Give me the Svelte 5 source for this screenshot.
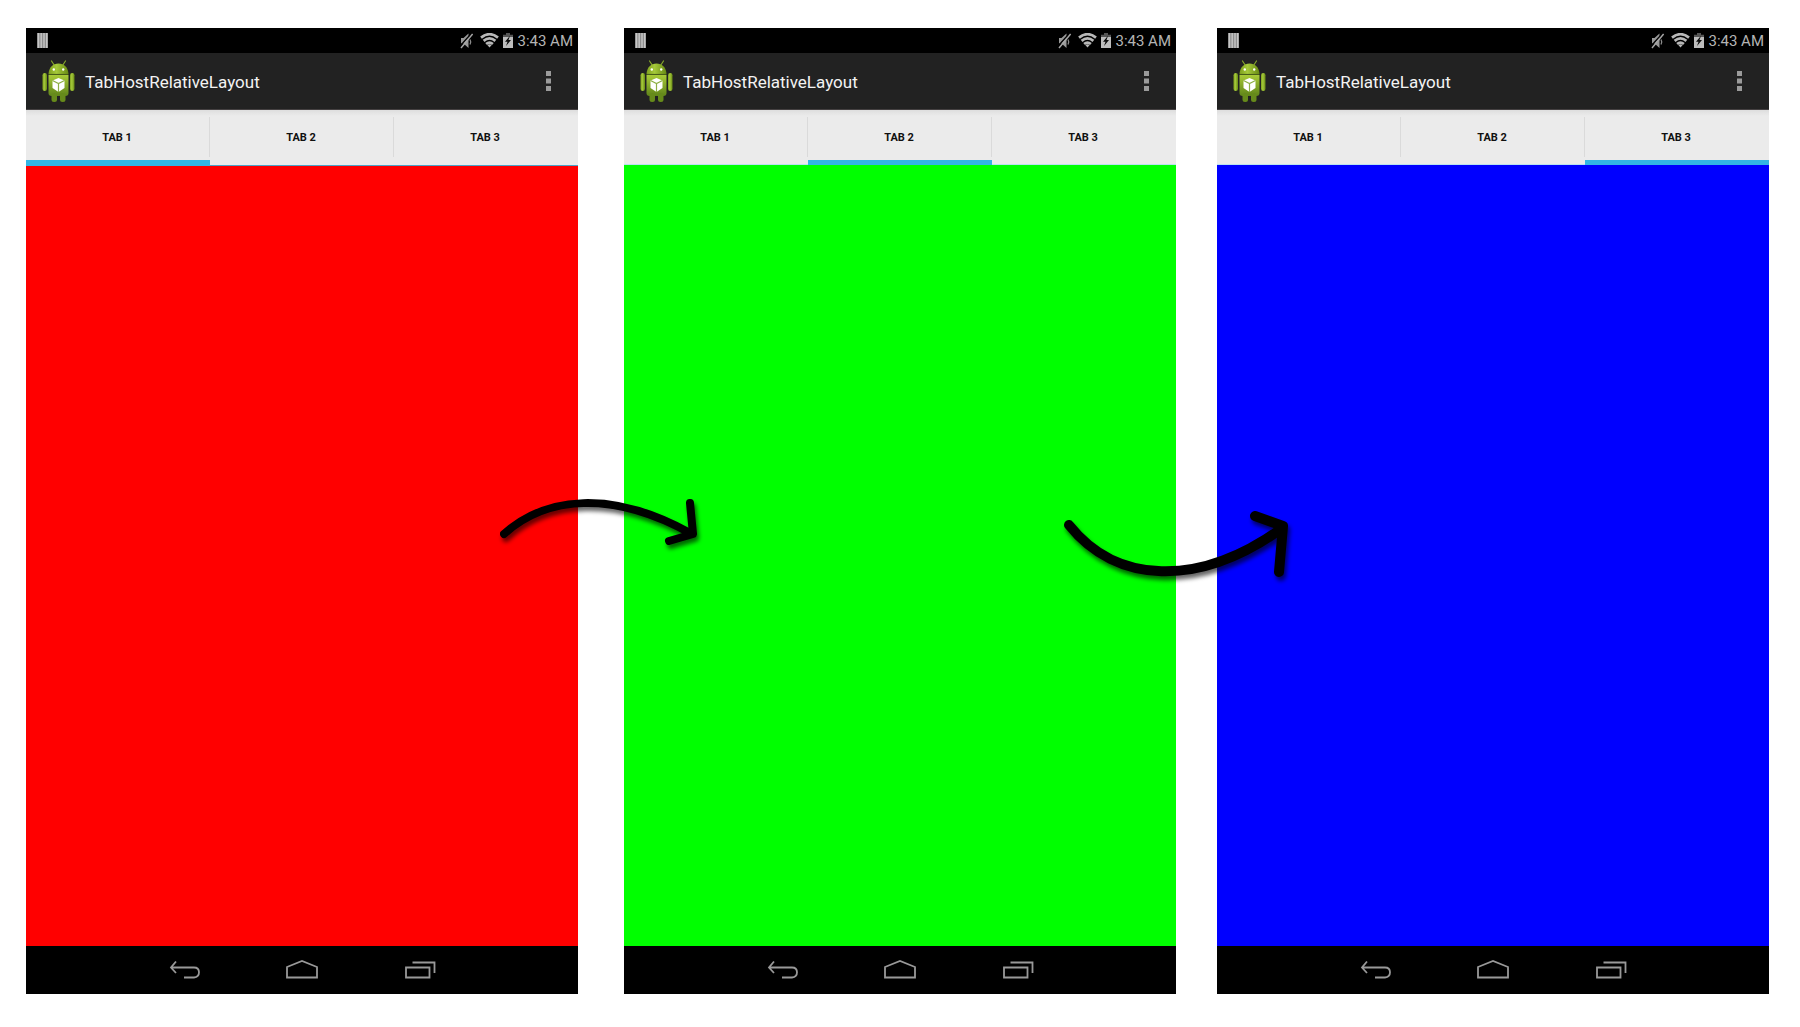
<script>
  const tabs = ['TAB 1', 'TAB 2', 'TAB 3'];
  const screens = [
    { selected: 0, tone: 'red' },
    { selected: 1, tone: 'green' },
    { selected: 2, tone: 'blue' }
  ];
</script>

<main class="board">
  {#each screens as screen, n}
    <section class="phone {screen.tone}" aria-label="Screen {n + 1}">
      <div class="status">
        <svg class="tray" width="11" height="15" viewBox="0 0 11 15" aria-hidden="true">
          <rect width="11" height="15" fill="#8e8e8e" />
          <path d="M1.5 0v15M4.2 0v15M7 0v15M9.7 0v15" stroke="#c6c6c6" stroke-width="1.4" />
        </svg>
        <div class="indicators">
          <svg class="mute" width="14" height="16" viewBox="0 0 14 16" aria-hidden="true">
            <path d="M1 5h2.500L8.500 0.500V15L3.500 10.500H1z" fill="#999" />
            <path d="M10 6.500q1.500 2.500 0 5" fill="none" stroke="#8c8c8c" stroke-width="1.300" />
            <path d="M11 1L-1 14" stroke="#000" stroke-width="1.400" />
            <path d="M12.600 1L1 15" stroke="#a8a8a8" stroke-width="1.400" />
          </svg>
          <svg width="19" height="15" viewBox="0 0 19 15" aria-hidden="true">
            <g fill="none" stroke="#b8b8b8" stroke-width="2.700">
              <path d="M1 4.600Q9.500 -2.200 18 4.600" />
              <path d="M3.600 7.900Q9.500 3 15.400 7.900" />
              <path d="M6.100 11Q9.500 8.100 12.900 11" />
            </g>
            <path d="M7.300 12Q9.500 10.500 11.700 12L9.500 14.600z" fill="#b8b8b8" />
          </svg>
          <svg width="10" height="15" viewBox="0 0 10 15" aria-hidden="true">
            <path d="M3 0h4v1.800h3v4H0v-4h3z" fill="#555" />
            <path d="M0 4h10v11H0z" fill="#bdbdbd" />
            <path d="M7 2.700L2 8.700h2.500L3 13l5-6H5.500z" fill="#0a0a0a" />
          </svg>
          <span class="time">3:43 AM</span>
        </div>
      </div>

      <header class="actionbar">
        <svg class="robot" width="33" height="43" viewBox="0 0 33 43" aria-hidden="true">
          <defs>
            <linearGradient id="skin{n}" x1="0" x2="1" y1="0" y2="0">
              <stop offset="0" stop-color="#7fa01e" />
              <stop offset="0.4" stop-color="#a5c93a" />
              <stop offset="1" stop-color="#688a14" />
            </linearGradient>
            <linearGradient id="body{n}" x1="0" x2="0" y1="0" y2="1">
              <stop offset="0" stop-color="#a9cb38" />
              <stop offset="1" stop-color="#5f8419" />
            </linearGradient>
          </defs>
          <path d="M9.500 1L12.500 5.500M23.500 1L20.500 5.500" stroke="#86a72b" stroke-width="1.200" stroke-linecap="round" />
          <path d="M6.500 14C7 7 11 3.500 16.500 3.500S26 7 26.500 14z" fill="url(#skin{n})" />
          <path d="M6.500 15h20v18q0 3-3 3h-14q-3 0-3-3z" fill="url(#body{n})" />
          <path d="M6.500 14.400h20" stroke="#587714" stroke-width="0.800" />
          <rect x="0.500" y="13" width="4.500" height="18" rx="2.200" fill="url(#skin{n})" />
          <rect x="28" y="13" width="4.500" height="18" rx="2.200" fill="url(#skin{n})" />
          <rect x="9.500" y="33" width="5.500" height="9" rx="2.500" fill="#668a1b" />
          <rect x="18" y="33" width="5.500" height="9" rx="2.500" fill="#668a1b" />
          <circle cx="11.800" cy="9.500" r="1.200" fill="#fff" />
          <circle cx="21.200" cy="9.500" r="1.200" fill="#fff" />
          <path d="M16.500 18L22.500 20.500V28L16.500 32L10.500 28V20.500z" fill="#fff" />
          <path d="M10.500 20.500L16.500 23.500L22.500 20.500M16.500 23.500V32" fill="none" stroke="#8daf45" stroke-width="1.200" />
        </svg>
        <h1>TabHostRelativeLayout</h1>
        <button class="overflow" aria-label="More options">
          <svg width="6" height="22" viewBox="0 0 6 22" aria-hidden="true">
            <path d="M0 1h5v5h-5zM0 8.500h5v5h-5zM0 16h5v5h-5z" fill="#9b9b9b" />
          </svg>
        </button>
      </header>

      <div class="tabs" role="tablist">
        {#each tabs as tab, i}
          <button role="tab" class="tab" class:selected={i === screen.selected} aria-selected={i === screen.selected}>{tab}</button>
        {/each}
      </div>

      <div class="content" role="tabpanel" aria-label={tabs[screen.selected]}></div>

      <nav class="navbar" aria-label="System navigation">
        <button aria-label="Back">
          <svg width="32" height="22" viewBox="0 0 32 22" aria-hidden="true">
            <path d="M8 2.500L3 8.500L8 14M3 8.500H26Q31 8.500 31 13.300T26 18.500H16" />
          </svg>
        </button>
        <button aria-label="Home">
          <svg width="34" height="22" viewBox="0 0 34 22" aria-hidden="true">
            <path d="M2 18.500V8L17 2L32 8V18.500z" />
          </svg>
        </button>
        <button aria-label="Recent apps">
          <svg width="32" height="22" viewBox="0 0 32 22" aria-hidden="true">
            <path d="M2 8.500H25.500V18.500H2zM8.500 3.500H30.500V14" />
          </svg>
        </button>
      </nav>
    </section>
  {/each}

  <svg class="arrows" viewBox="0 0 1800 1027" aria-hidden="true">
    <g class="stroke">
      <path d="M504 534C546 496 612 490 690 533" stroke-width="8" />
      <path d="M690 503L693 534L669 541" stroke-width="8" />
    </g>
    <g class="stroke">
      <path d="M1069 525C1116 584 1198 588 1281 529" stroke-width="10" />
      <path d="M1255 516L1283 526L1279 572" stroke-width="10" />
    </g>
  </svg>
</main>

<style>
  :global(body) {
    margin: 0;
    background: #fff;
  }

  .board {
    position: relative;
    box-sizing: border-box;
    display: grid;
    grid-template-columns: 1fr 46px 1fr 41px 1fr;
    min-height: 100vh;
    padding: 28px 31px 33px 26px;
    font-family: Roboto, "Liberation Sans", sans-serif;
  }

  .phone {
    display: flex;
    flex-direction: column;
    min-width: 0;
    background: #000;
  }

  .phone.red { grid-column: 1; --tone: #f00; --tabs: 56px; --stripe: 6px; --line: #4aa3c8; }
  .phone.green { grid-column: 3; --tone: #0f0; --tabs: 55px; --stripe: 5px; --line: #b9e2f1; }
  .phone.blue { grid-column: 5; --tone: #00f; --tabs: 55px; --stripe: 5px; --line: #b9e2f1; }

  button {
    display: flex;
    align-items: center;
    justify-content: center;
    margin: 0;
    padding: 0;
    border: 0;
    background: none;
    font: inherit;
  }

  .status {
    display: flex;
    align-items: center;
    justify-content: space-between;
    height: 25px;
    padding: 0 5px 0 11px;
  }

  .indicators {
    display: flex;
    align-items: center;
    gap: 4px;
  }

  .mute {
    margin-right: 2px;
  }

  .time {
    color: #b4b4b4;
    font-size: 15px;
    line-height: 24px;
    padding-top: 1px;
  }

  .actionbar {
    box-sizing: border-box;
    display: flex;
    align-items: center;
    height: 57px;
    padding: 0 16px;
    border-bottom: 1px solid #444041;
    background: #222;
  }

  h1 {
    flex: 1;
    margin: 0 0 0 10px;
    padding-top: 2px;
    color: #f3f3f3;
    font-size: 17px;
    font-weight: 400;
    line-height: 24px;
    white-space: nowrap;
  }

  .overflow {
    width: 26px;
    height: 48px;
  }

  .tabs {
    box-sizing: border-box;
    display: grid;
    grid-template-columns: repeat(3, 1fr);
    height: var(--tabs);
    border-bottom: 1px solid var(--line);
    background: linear-gradient(#dedede, #ebebeb 6px);
  }

  .tab {
    position: relative;
    height: 54px;
    padding: 2px 2px 0 0;
    color: #101010;
    font-size: 11px;
    font-weight: 700;
    line-height: 16px;
  }

  .tab + .tab::before {
    content: "";
    position: absolute;
    left: -1px;
    top: 7px;
    width: 1px;
    height: 40px;
    background: #dadada;
  }

  .tab.selected::after {
    content: "";
    position: absolute;
    left: 0;
    right: 0;
    top: 50px;
    height: var(--stripe);
    background: #33b5e5;
  }

  .content {
    flex: 1;
    background: var(--tone);
  }

  .navbar {
    display: flex;
    align-items: center;
    justify-content: center;
    height: 48px;
  }

  .navbar button {
    width: 118px;
    height: 48px;
  }

  .navbar path {
    fill: none;
    stroke: #999;
    stroke-width: 1.8;
  }

  .arrows {
    position: absolute;
    inset: 0;
    width: 100%;
    height: 100%;
    pointer-events: none;
  }

  .stroke {
    fill: none;
    stroke: #000;
    stroke-linecap: round;
    stroke-linejoin: round;
    filter: drop-shadow(2px 4px 2px rgb(0 0 0 / 0.6));
  }
</style>
